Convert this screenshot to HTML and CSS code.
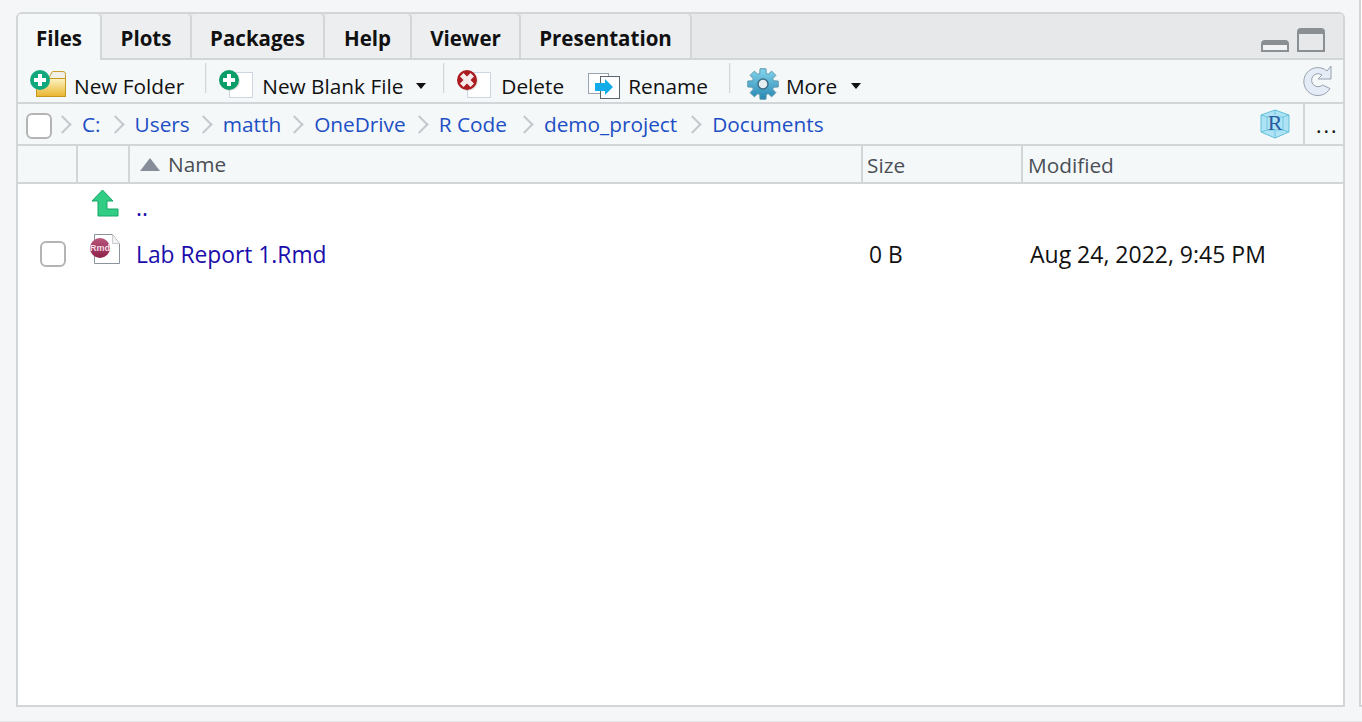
FILE: index.html
```html
<!DOCTYPE html>
<html lang="en">
<head>
    <meta charset="UTF-8">
    <meta name="viewport" content="width=device-width, initial-scale=1.0">
    <title>Files</title>
    <link rel="stylesheet" href="styles.css">
</head>
<body>
    <div class="pane">
        <div class="tabs">
            <div class="tab tab-active">Files</div>
            <div class="tab tab-plots">Plots</div>
            <div class="tab tab-packages">Packages</div>
            <div class="tab tab-help">Help</div>
            <div class="tab tab-viewer">Viewer</div>
            <div class="tab tab-presentation">Presentation</div>
            <div class="window-btns">
                <div class="win-min"></div>
                <div class="win-max"></div>
            </div>
        </div>

        <div class="toolbar">
            <button class="tool tool-folder">
                <svg class="icon-low" width="38" height="30" viewBox="0 0 38 30">
                    <defs>
                        <linearGradient id="folderFill" x1="0" y1="0" x2="0" y2="1">
                            <stop offset="0" stop-color="#fdf3c4"/>
                            <stop offset="1" stop-color="#e9b52e"/>
                        </linearGradient>
                    </defs>
                    <path d="M19 8 l3 -6 q0.500 -0.500 1 -0.500 h10 q2.500 0 2.500 2.500 v5 h-16z" fill="#f1efe6" stroke="#c9a02c"/>
                    <rect x="6.500" y="8.500" width="29" height="18" fill="url(#folderFill)" stroke="#c49a1e"/>
                    <circle cx="10" cy="10" r="10" fill="#12a87e"/>
                    <path d="M8 4 h4 v4 h4 v4 h-4 v4 h-4 v-4 h-4 v-4 h4z" fill="#fff"/>
                </svg>
                <span>New Folder</span>
            </button>
            <div class="tool-sep"></div>
            <button class="tool tool-blank">
                <svg class="icon-low" width="36" height="30" viewBox="0 0 36 30">
                    <rect x="11.500" y="2.500" width="23" height="25" fill="#fff" stroke="#ccd5e0"/>
                    <circle cx="12" cy="11" r="10" fill="#000" opacity="0.120"/>
                    <circle cx="11" cy="10" r="10" fill="#0a9d68"/>
                    <path d="M9 4 h4 v4 h4 v4 h-4 v4 h-4 v-4 h-4 v-4 h4z" fill="#fff"/>
                </svg>
                <span>New Blank File</span>
                <i class="caret"></i>
            </button>
            <div class="tool-sep"></div>
            <button class="tool tool-delete">
                <svg class="icon-low" width="36" height="30" viewBox="0 0 36 30">
                    <rect x="11.500" y="2.500" width="23" height="25" fill="#fff" stroke="#ccd5e0"/>
                    <circle cx="12" cy="11" r="10" fill="#000" opacity="0.120"/>
                    <circle cx="11" cy="10" r="10" fill="#ab1c21"/>
                    <path d="M11 6.500 l3.500 -3.500 l3.500 3.500 l-3.500 3.500 l3.500 3.500 l-3.500 3.500 l-3.500 -3.500 l-3.500 3.500 l-3.500 -3.500 l3.500 -3.500 l-3.500 -3.500 l3.500 -3.500z" fill="#f6eaea"/>
                </svg>
                <span>Delete</span>
            </button>
            <button class="tool tool-rename">
                <svg class="icon-rename" width="34" height="28" viewBox="0 0 34 28">
                    <rect x="1.500" y="1.500" width="20" height="20" fill="#fff" stroke="#9aa4b0"/>
                    <rect x="13.500" y="4.500" width="19" height="22" fill="#fff" stroke="#5d6670"/>
                    <path d="M8 11 h10 v-4 l8 8 l-8 8 v-4 h-10z" fill="#12ade9"/>
                </svg>
                <span>Rename</span>
            </button>
            <div class="tool-sep"></div>
            <button class="tool tool-more">
                <svg class="icon-gear" width="32" height="32" viewBox="0 0 32 32">
                    <defs>
                        <linearGradient id="gearFill" x1="0" y1="0" x2="0" y2="1">
                            <stop offset="0" stop-color="#86d6ee"/>
                            <stop offset="1" stop-color="#2586b2"/>
                        </linearGradient>
                    </defs>
                    <polygon points="12.800,5.480 13.040,0.780 18.960,0.780 19.200,5.480 21.180,6.300 24.670,3.140 28.860,7.330 25.700,10.820 26.520,12.800 31.220,13.040 31.220,18.960 26.520,19.200 25.700,21.180 28.860,24.670 24.670,28.860 21.180,25.700 19.200,26.520 18.960,31.220 13.040,31.220 12.800,26.520 10.820,25.700 7.330,28.860 3.140,24.670 6.300,21.180 5.480,19.200 0.780,18.960 0.780,13.040 5.480,12.800 6.300,10.820 3.140,7.330 7.330,3.140 10.820,6.300" fill="url(#gearFill)" stroke="#5b98ad" stroke-linejoin="round"/>
                    <circle cx="16" cy="16" r="5" fill="#e6eef2" stroke="#3f6f86" stroke-width="1.500"/>
                </svg>
                <span>More</span>
                <i class="caret"></i>
            </button>
            <svg class="refresh" width="30" height="32" viewBox="0 0 30 32">
                <path d="M29 1 V14 H16 L20 10 A6.500 6.500 0 1 0 20.500 20 L28 23.500 A14 14 0 1 1 25 6 Z" fill="#e4edf7" stroke="#98a1ac"/>
            </svg>
        </div>

        <div class="pathbar">
            <span class="check path-check"></span>
            <div class="crumbs">
                <i class="chev"></i><a class="crumb crumb-c">C:</a>
                <i class="chev"></i><a class="crumb">Users</a>
                <i class="chev"></i><a class="crumb">matth</a>
                <i class="chev"></i><a class="crumb">OneDrive</a>
                <i class="chev"></i><a class="crumb crumb-rcode">R Code</a>
                <i class="chev"></i><a class="crumb crumb-demo">demo_project</a>
                <i class="chev"></i><a class="crumb">Documents</a>
            </div>
            <svg class="project" width="30" height="30" viewBox="0 0 30 30">
                <path d="M15 1 l14 5 v17 l-14 6 l-14 -6 v-17z" fill="#aee3f6" stroke="#62bfd8"/>
                <path d="M1 6 l6 2 h16 l6 -2 M15 1 v5 M15 29 v-7 M7 8 v13 l-6 2 M23 8 v13 l6 2 M7 21 h16" fill="none" stroke="#62bfd8" stroke-width="0.800"/>
                <text x="15" y="21" class="project-r">R</text>
            </svg>
            <div class="dots">...</div>
        </div>

        <div class="head">
            <div class="col-check"></div>
            <div class="col-icon"></div>
            <div class="col-name"><i class="sort-up"></i><span>Name</span></div>
            <div class="col-size">Size</div>
            <div class="col-mod">Modified</div>
        </div>

        <div class="rows">
            <div class="row row-up">
                <div class="cell-check"></div>
                <div class="cell-icon icon-up">
                    <svg width="28" height="28" viewBox="0 0 28 28">
                        <path d="M11.500 1 L22 12 H16 V20 H27 V27 H7 V12 H1 Z" fill="#31cd85" stroke="#16a566"/>
                    </svg>
                </div>
                <a class="cell-name">..</a>
            </div>
            <div class="row">
                <div class="cell-check"><span class="check"></span></div>
                <div class="cell-icon icon-rmd">
                    <svg width="32" height="32" viewBox="0 0 32 32">
                        <defs>
                            <linearGradient id="rmdFill" x1="0" y1="0" x2="0" y2="1">
                                <stop offset="0" stop-color="#b8557c"/>
                                <stop offset="1" stop-color="#8e2249"/>
                            </linearGradient>
                        </defs>
                        <path d="M5.500 1.500 h18 l7 9 v20 h-25z" fill="#fff" stroke="#8d939a"/>
                        <path d="M23.500 1.500 v9 h7" fill="#f2f2f2" stroke="#c9ccd0"/>
                        <circle cx="11" cy="15" r="10" fill="url(#rmdFill)"/>
                        <text x="11" y="18" class="rmd">Rmd</text>
                    </svg>
                </div>
                <a class="cell-name">Lab Report 1.Rmd</a>
                <div class="cell-size">0 B</div>
                <div class="cell-mod">Aug 24, 2022, 9:45 PM</div>
            </div>
        </div>
    </div>
    <div class="side-pane"></div>
</body>
</html>
```

FILE: styles.css
```css
html, body {
    height: 100%;
}

body {
    margin: 0;
    background-color: #f4f6f8;
    font-family: "Open Sans", "Noto Sans", Arial, sans-serif;
    font-size: 20.800px;
    color: #111;
    overflow: hidden;
    border-bottom: 1px solid #e2e4e6;
    box-sizing: border-box;
    display: flex;
    align-items: flex-start;
}

.pane {
    box-sizing: border-box;
    width: 1329px;
    height: 695px;
    margin: 12px 0 0 16px;
    border: 2px solid #d3d6d9;
    border-radius: 6px 6px 0 0;
    background-color: #fff;
    display: flex;
    flex-direction: column;
    flex-shrink: 0;
}

/* next pane, only its edge is on screen */
.side-pane {
    box-sizing: border-box;
    flex: 1;
    height: 707px;
    margin-left: 14px;
    border-left: 2px solid #d3d6d9;
    border-bottom: 2px solid #d3d6d9;
    background-color: #fff;
}

/* tabs */
.tabs {
    display: flex;
    height: 46px;
    background-color: #e6e8ea;
    border-bottom: 2px solid #d3d6d9;
    box-sizing: border-box;
    border-radius: 4px 4px 0 0;
    flex-shrink: 0;
}

.tab {
    box-sizing: border-box;
    height: 44px;
    margin-right: 2px;
    font-weight: 700;
    font-size: 20.500px;
    line-height: 48px;
    text-align: center;
    background-color: #eceef0;
    border-radius: 4px 4px 0 0;
    box-shadow: 2px 0 0 #d3d6d9;
}

.tab-active {
    width: 82px;
    height: 46px;
    background-color: #f4f8f9;
}

.tab-plots { width: 88px; }
.tab-packages { width: 131px; }
.tab-help { width: 85px; }
.tab-viewer { width: 107px; }
.tab-presentation { width: 169px; }

.window-btns {
    margin-left: auto;
    margin-right: 18px;
    display: flex;
    align-items: flex-end;
    gap: 8px;
    padding-bottom: 6px;
}

.win-min {
    box-sizing: border-box;
    width: 28px;
    height: 12px;
    border: 2px solid #8a8f94;
    border-top-width: 5px;
    border-radius: 4px 4px 0 0;
    background-color: #f2f3f4;
}

.win-max {
    box-sizing: border-box;
    width: 28px;
    height: 24px;
    border: 2px solid #8a8f94;
    border-top-width: 6px;
    border-radius: 4px 4px 0 0;
}

/* toolbar */
.toolbar {
    display: flex;
    align-items: center;
    height: 44px;
    box-sizing: border-box;
    background-color: #f4f8f9;
    border-bottom: 2px solid #d3d6d9;
    flex-shrink: 0;
    padding-left: 12px;
}

.tool {
    display: flex;
    align-items: center;
    border: none;
    background: none;
    padding: 0;
    margin: 0;
    font: inherit;
    color: #111;
    height: 42px;
}

.tool svg {
    flex-shrink: 0;
}

.tool span {
    padding-top: 10px;
}

.tool .icon-low { margin-top: 8px; }
.tool .icon-rename { margin-top: 10px; }
.tool .icon-gear { margin-top: 6px; }

.tool-folder span { margin-left: 6px; }
.tool-blank span { margin-left: 8px; }
.tool-delete span { margin-left: 9px; }
.tool-rename span { margin-left: 7px; }
.tool-more span { margin-left: 7px; }

.tool-folder { margin-right: 21px; }
.tool-blank { margin: 0 17px 0 11px; }
.tool-delete { margin-left: 11px; }
.tool-rename { margin: 0 21px 0 23px; }
.tool-more { margin-left: 16px; }

.tool-sep {
    width: 1px;
    height: 30px;
    margin-top: -6px;
    background-color: #d3d6d9;
    border-right: 1px solid #eceef0;
}

.caret {
    display: inline-block;
    margin-left: 13px;
    margin-top: 10px;
    border-left: 5.500px solid transparent;
    border-right: 5.500px solid transparent;
    border-top: 6px solid #111;
}

.tool-more .caret {
    margin-left: 14px;
}

.refresh {
    margin-left: auto;
    margin-right: 11px;
}

/* path bar */
.pathbar {
    display: flex;
    align-items: center;
    height: 42px;
    box-sizing: border-box;
    background-color: #f4f8f9;
    border-bottom: 2px solid #d3d6d9;
    flex-shrink: 0;
    padding-left: 8px;
}

.check {
    display: block;
    box-sizing: border-box;
    width: 26px;
    height: 26px;
    border: 2px solid #b4b4b4;
    border-radius: 6px;
    background-color: #fff;
}

.path-check {
    margin-top: 4px;
}

.crumbs {
    display: flex;
    align-items: center;
    margin-left: 5px;
}

.crumb {
    color: #1d4fc4;
    font-size: 20.800px;
    margin-left: 14px;
    margin-right: 8px;
}

.crumb-c { margin-right: 9px; }
.crumb-rcode { margin-right: 12px; }
.crumb-demo { margin-right: 10px; }

.chev {
    display: block;
    width: 13px;
    height: 13px;
    box-sizing: border-box;
    border-top: 2px solid #c5c9ce;
    border-right: 2px solid #c5c9ce;
    transform: rotate(45deg);
    margin-left: -1px;
    margin-right: -1px;
}

.project {
    margin-left: auto;
}

.project-r {
    font-family: "Liberation Serif", serif;
    font-size: 22px;
    fill: #2a5da0;
    text-anchor: middle;
}

.dots {
    box-sizing: border-box;
    width: 40px;
    height: 40px;
    margin-left: 13px;
    border-left: 2px solid #d3d6d9;
    padding-left: 11px;
    font-size: 21px;
    line-height: 43px;
    letter-spacing: 2px;
}

/* file table */
.head {
    display: flex;
    height: 38px;
    box-sizing: border-box;
    background-color: #f4f8f9;
    border-bottom: 2px solid #d3d6d9;
    flex-shrink: 0;
    color: #4a4f55;
    line-height: 38px;
}

.head > div {
    box-sizing: border-box;
    border-right: 2px solid #d3d6d9;
}

.col-check { width: 60px; }
.col-icon { width: 52px; }

.col-name {
    width: 733px;
    padding-left: 10px;
    display: flex;
    align-items: center;
}

.col-size {
    width: 160px;
    padding-left: 4px;
}

.head > .col-mod {
    flex: 1;
    border-right: none;
    padding-left: 5px;
}

.sort-up {
    display: block;
    margin-right: 8px;
    border-left: 10px solid transparent;
    border-right: 10px solid transparent;
    border-bottom: 13px solid #878d99;
}

.rows {
    flex: 1;
    background-color: #fff;
    font-size: 22.800px;
}

.row {
    display: flex;
    align-items: center;
    box-sizing: border-box;
    height: 46px;
    padding-bottom: 2px;
}

.row-up {
    height: 48px;
}

.cell-check {
    width: 60px;
    display: flex;
    justify-content: center;
    padding-left: 9px;
    box-sizing: border-box;
}

.cell-icon {
    width: 52px;
    display: flex;
    box-sizing: border-box;
    align-self: flex-start;
}

.icon-up {
    padding: 5px 0 0 13px;
}

.icon-rmd {
    padding: 1px 0 0 11px;
}

.cell-name {
    width: 733px;
    box-sizing: border-box;
    padding-left: 6px;
    color: #1a0dab;
}

.cell-size {
    width: 160px;
    box-sizing: border-box;
    padding-left: 6px;
}

.cell-mod {
    padding-left: 7px;
    font-size: 23px;
}

.rmd {
    font-family: "Liberation Sans", Arial, sans-serif;
    font-size: 9px;
    font-weight: 700;
    fill: #f4dfe6;
    text-anchor: middle;
}
```
